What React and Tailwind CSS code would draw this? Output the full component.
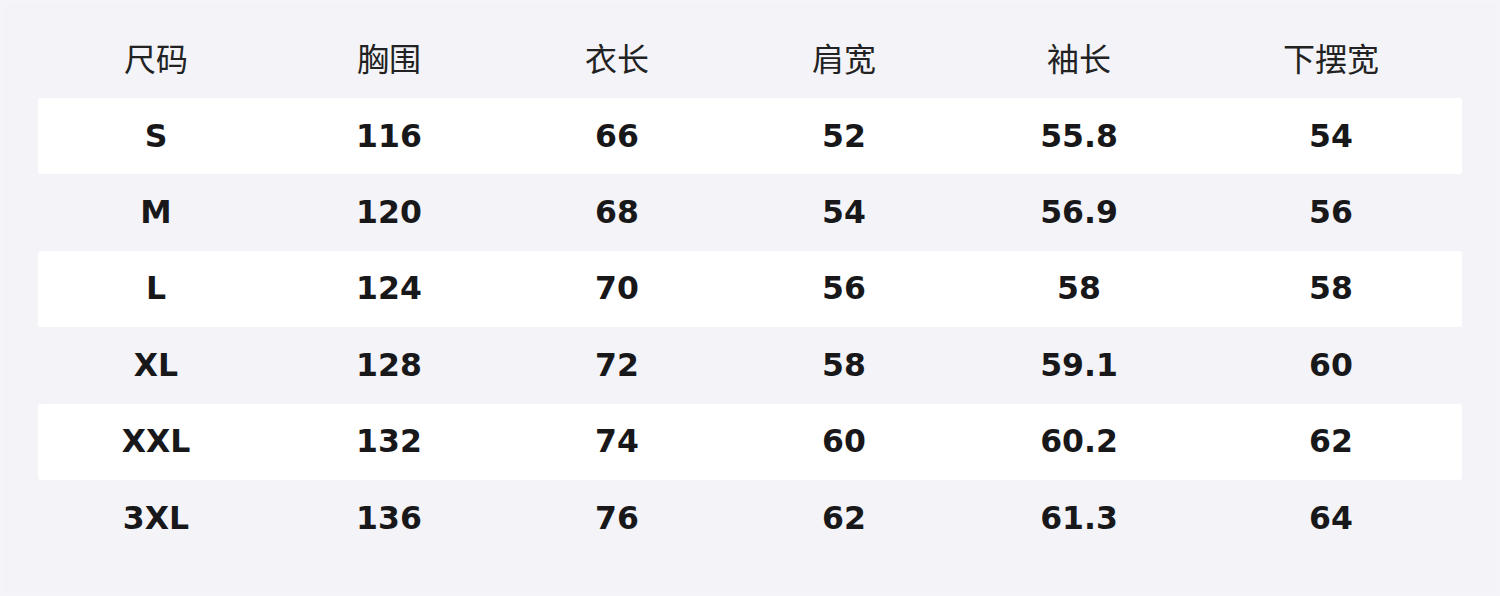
const headers = ["尺码", "胸围", "衣长", "肩宽", "袖长", "下摆宽"];

const rows = [
  ["S", "116", "66", "52", "55.8", "54"],
  ["M", "120", "68", "54", "56.9", "56"],
  ["L", "124", "70", "56", "58", "58"],
  ["XL", "128", "72", "58", "59.1", "60"],
  ["XXL", "132", "74", "60", "60.2", "62"],
  ["3XL", "136", "76", "62", "61.3", "64"],
];

// column widths picked so the cell centres line up with the chart
const cols = "grid grid-cols-[236px_230px_226px_228px_242px_262px]";

export default function App() {
  return (
    <div className="w-[1500px] h-[596px] bg-[#f3f3f8] border-[3px] border-[#f5f5f9] pt-[19px] pl-[35px] font-['DejaVu_Sans','Noto_Sans_CJK_SC',sans-serif] text-[#18181a]">
      <div className="w-[1424px]">
        {/* 表头 */}
        <div className={`${cols} h-[76px] items-center text-[32px] text-[#222]`}>
          {headers.map((h) => (
            <div key={h} className="text-center">
              {h}
            </div>
          ))}
        </div>
        {/* 尺码行, 单数行白底 */}
        {rows.map((r, i) => (
          <div
            key={r[0]}
            className={`${cols} h-[76.4px] items-center rounded-[3px] text-[31.5px] font-bold ${
              i % 2 === 0 ? "bg-white" : ""
            }`}
          >
            {r.map((c, j) => (
              <div key={j} className="text-center">
                {c}
              </div>
            ))}
          </div>
        ))}
      </div>
    </div>
  );
}
